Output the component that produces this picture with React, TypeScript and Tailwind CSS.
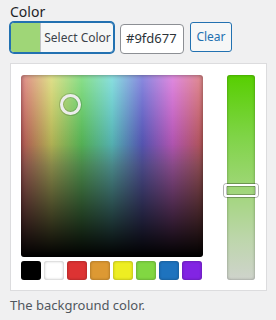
import React from "react";

const swatches = ["#000000", "#ffffff", "#dd3333", "#dd9933", "#eeee22", "#81d742", "#1e73be", "#8224e3"];

export default function App() {
  return (
    <div
      className="w-[276px] h-[320px] bg-[#f0f0f1] pl-[10px] pt-[3px] text-[#1d2327]"
      style={{ fontFamily: '"Noto Sans", "Open Sans", sans-serif' }}
    >
      <div className="text-[14px] leading-[18px] text-[#1d2327]">Color</div>
      <div className="flex items-start mt-[1px] h-[31px]">
        <div className="flex h-[31px] w-[104px] rounded-[4px] border border-[#2271b1] shadow-[0_0_0_1px_#2271b1] overflow-hidden bg-[#f6f7f7]">
          <div className="w-[30px] h-full bg-[#9fd677] border-r border-[#c3c4c7]" />
          <div className="flex-1 flex items-center justify-center text-[12px] text-[#3c434a] pl-[1px]">Select Color</div>
        </div>
        <div className="ml-[6px] mt-[2px] w-[64px] h-[30px] rounded-[4px] border border-[#8c8f94] bg-white flex items-center pl-[5px] text-[13px] text-[#2c3338]">
          #9fd677
        </div>
        <div className="ml-[6px] w-[42px] h-[30px] rounded-[3px] border border-[#2271b1] bg-[#f6f7f7] flex items-center justify-center text-[12px] text-[#2271b1]">
          Clear
        </div>
      </div>
      <div className="mt-[10px] w-[257px] h-[228px] border border-[#dcdcde] bg-white pt-[11px] pl-[10px] flex">
        <div className="flex flex-col w-[182px]">
          <div
            className="relative w-[182px] h-[182px] rounded-[3px] overflow-hidden"
            style={{
              background:
                "linear-gradient(to bottom, rgba(255,255,255,0.4) 0%, rgba(255,255,255,0) 38%, rgba(0,0,0,0) 38%, rgba(0,0,0,1) 100%), linear-gradient(to bottom, rgba(140,140,140,0.45) 0%, rgba(128,128,128,0.7) 50%, rgba(128,128,128,0.7) 100%), linear-gradient(to right, #ff0000 0%, #ffff00 16.66%, #00ff00 33.33%, #00ffff 50%, #0000ff 66.66%, #ff00ff 83.33%, #ff0000 100%)",
            }}
          >
            <div className="absolute inset-0 rounded-[3px] shadow-[inset_0_0_4px_rgba(0,0,0,0.45)]" />
            <div className="absolute left-[39px] top-[19px] w-[21px] h-[21px] rounded-full border-[3px] border-[#ececec] shadow-[0_0_0_1px_rgba(0,0,0,0.15),inset_0_0_0_1px_rgba(0,0,0,0.15)]" />
          </div>
          <div className="flex gap-[3px] mt-[4px]">
            {swatches.map((c) => (
              <div
                key={c}
                className="w-[20px] h-[19px] rounded-[3px] shadow-[inset_0_0_3px_rgba(0,0,0,0.35)]"
                style={{ backgroundColor: c }}
              />
            ))}
          </div>
        </div>
        <div className="relative ml-[24px] w-[28px] h-[205px]">
          <div
            className="w-full h-full rounded-[3px] shadow-[inset_0_0_3px_rgba(0,0,0,0.35)]"
            style={{ background: "linear-gradient(to bottom, #57cf00 0%, #7fd447 30%, #9fd677 55%, #bdd6ab 80%, #cfd3cc 100%)" }}
          />
          <div className="absolute left-[-3px] top-[109px] w-[34px] h-[13px] rounded-[3px] border-2 border-white shadow-[0_0_0_1px_rgba(0,0,0,0.3),inset_0_0_0_1px_rgba(0,0,0,0.25)]" />
        </div>
      </div>
      <div className="mt-[5px] text-[13px] leading-[18px] text-[#50575e]">The background color.</div>
    </div>
  );
}
